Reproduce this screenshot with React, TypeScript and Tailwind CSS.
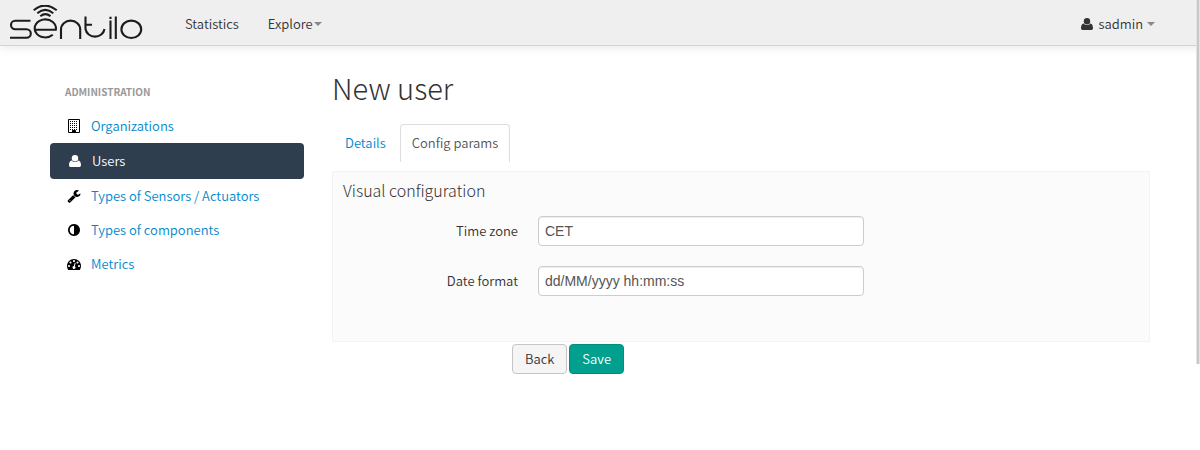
import type { ReactNode } from "react";

const ICON_PATHS = {
  wrench:
    "M448 1472q0-26-19-45t-45-19-45 19-19 45 19 45 45 19 45-19 19-45zm644-420l-682 682q-37 37-90 37-52 0-91-37l-106-108q-38-36-38-90 0-53 38-91l681-681q39 98 114.5 173.5t173.5 114.5zm634-435q0 39-23 106-47 134-164.5 217.5t-258.5 83.5q-185 0-316.5-131.5t-131.5-316.5 131.5-316.5 316.5-131.5q58 0 121.5 16.5t107.5 46.5q16 11 16 28t-16 28l-293 169v224l193 107q5-3 79-48.5t135.5-81 70.5-35.5q15 0 23.5 10t8.5 25z",
  adjust:
    "M896 1440v-1088q-148 0-273 73t-198 198-73 273 73 273 198 198 273 73zm768-544q0 209-103 385.5t-279.5 279.5-385.5 103-385.5-103-279.5-279.5-103-385.5 103-385.5 279.5-279.5 385.5-103 385.5 103 279.5 279.5 103 385.5z",
  gauge:
    "M384 1152q0-53-37.5-90.5t-90.5-37.5-90.5 37.5-37.5 90.5 37.5 90.5 90.5 37.5 90.5-37.5 37.5-90.5zm192-448q0-53-37.5-90.5t-90.5-37.5-90.5 37.5-37.5 90.5 37.5 90.5 90.5 37.5 90.5-37.5 37.5-90.5zm428 481l101-382q6-26-7.5-48.5t-38.5-29.5-48 6.5-30 39.5l-101 382q-60 5-107 43.5t-63 98.5q-20 77 20 146t117 89 146-20 89-117q16-60-6-117t-72-91zm660-33q0-53-37.5-90.5t-90.5-37.5-90.5 37.5-37.5 90.5 37.5 90.5 90.5 37.5 90.5-37.5 37.5-90.5zm-640-640q0-53-37.5-90.5t-90.5-37.5-90.5 37.5-37.5 90.5 37.5 90.5 90.5 37.5 90.5-37.5 37.5-90.5zm448 192q0-53-37.5-90.5t-90.5-37.5-90.5 37.5-37.5 90.5 37.5 90.5 90.5 37.5 90.5-37.5 37.5-90.5zm320 448q0 261-141 483-19 29-54 29h-1402q-35 0-54-29-141-221-141-483 0-182 71-348t191-286 286-191 348-71 348 71 286 191 191 286 71 348z",
};

function Icon({ name }: { name: keyof typeof ICON_PATHS }) {
  return (
    <svg className="size-3.5 shrink-0" viewBox="0 0 1792 1792" fill="currentColor" aria-hidden="true">
      <path d={ICON_PATHS[name]} />
    </svg>
  );
}

function UserIcon() {
  return (
    <svg className="size-3.5 shrink-0" viewBox="0 0 14 14" fill="currentColor" aria-hidden="true">
      <circle cx="7" cy="4.2" r="3.2" />
      <path d="M3.700 6.500C1.800 6.700 1 8.700 1 11.200c0 1.200.8 1.800 1.900 1.800h8.200c1.100 0 1.900-.6 1.900-1.800 0-2.500-.8-4.500-2.700-4.700C9.400 7.500 8.300 8 7 8s-2.400-.5-3.300-1.500z" />
    </svg>
  );
}

function BuildingIcon() {
  return (
    <svg className="size-3.5 shrink-0" viewBox="0 0 14 14" fill="none" stroke="currentColor" aria-hidden="true">
      <path d="M1.5 .5h11v13h-11z" />
      <path d="M3 2.5h8M3 4.5h8M3 6.500h8M3 8.500h8M3 10.500h8" strokeDasharray="1 1" />
      <path d="M5.500 13.500V11.500h3v2z" fill="currentColor" />
    </svg>
  );
}

function Logo() {
  return (
    <svg className="h-9 w-[134px]" viewBox="0 0 134 36" fill="none" stroke="#1c1c1c" strokeWidth="2.1" role="img" aria-label="sentilo">
      <path d="M21.500 15.800H6.200a4.200 4.200 0 0 0 0 8.400h11.300a4.300 4.300 0 0 1 0 8.600H1" />
      <path d="M25.500 24.800h21.300a10.600 9 0 1 0-3 5" />
      <path d="M52 34V24.500a9.600 8.900 0 0 1 19.200 0V34" />
      <path d="M76.500 11.500v12.500a9.600 8.900 0 0 0 19 0M76.500 19.800h6.500" />
      <path d="M101.500 15.500V34M106.800 11.500V34M101.500 11.700v2.200" />
      <ellipse cx="122.300" cy="24.300" rx="9.900" ry="8.700" />
      <path d="M24.700 5.300q11-9.500 23 0M28.300 8.200q8-6.500 16 0M31.300 11.200q5-4 10.200 0" />
    </svg>
  );
}

function Caret() {
  return (
    <svg className="h-1 w-2" viewBox="0 0 8 4" fill="#888" aria-hidden="true">
      <path d="M0 0h8L4 4z" />
    </svg>
  );
}

function SideLink({ icon, children }: { icon: ReactNode; children: ReactNode }) {
  return (
    <a href="#" className="flex h-[34px] items-center gap-2.5 pl-[17px] text-[#0088cc]">
      <span className="text-black">{icon}</span>
      {children}
    </a>
  );
}

function Field({ id, label, value }: { id: string; label: string; value: string }) {
  return (
    <div className="flex gap-5">
      <label htmlFor={id} className="w-[175px] shrink-0 text-right leading-[30px]">
        {label}
      </label>
      <input
        id={id}
        type="text"
        defaultValue={value}
        className="h-[30px] w-full max-w-[326px] min-w-0 rounded border border-[#ccc] bg-white px-1.5 font-['Liberation_Sans',Arial,sans-serif] text-sm font-normal text-[#555] shadow-[inset_0_1px_1px_rgba(0,0,0,0.075)]"
      />
    </div>
  );
}

export default function App() {
  return (
    <div className="relative font-['Noto_Sans_CJK_SC',sans-serif] text-[13px] leading-5 font-[350] text-[#333]">
      <header className="flex h-[46px] items-center justify-between border-b border-[#d4d4d4] bg-[#efefef] pr-[45px] pl-[9px] shadow-[0_1px_10px_rgba(0,0,0,0.1)]">
        <div className="flex items-center">
          <a href="#">
            <Logo />
          </a>
          <nav className="ml-[42px] flex gap-[29px] pt-0.5">
            <a href="#">Statistics</a>
            <button type="button" className="flex items-center gap-px">
              Explore
              <Caret />
            </button>
          </nav>
        </div>
        <button type="button" className="flex items-center gap-1 pt-0.5">
          <UserIcon />
          <span>sadmin</span>
          <Caret />
        </button>
      </header>

      <div className="flex gap-7 px-[50px]">
        <aside className="w-[254px] shrink-0 pt-9">
          <h2 className="pl-[15px] text-[10px] font-bold text-[#999]">ADMINISTRATION</h2>
          <nav className="mt-[7px]">
            <SideLink icon={<BuildingIcon />}>Organizations</SideLink>
            <a
              href="#"
              aria-current="page"
              className="flex h-9 items-center gap-2.5 rounded bg-[#2f3e4e] pl-[18px] text-white"
            >
              <UserIcon />
              Users
            </a>
            <SideLink icon={<Icon name="wrench" />}>Types of Sensors / Actuators</SideLink>
            <SideLink icon={<Icon name="adjust" />}>Types of components</SideLink>
            <SideLink icon={<Icon name="gauge" />}>Metrics</SideLink>
          </nav>
        </aside>

        <main className="min-w-0 flex-1 pt-[22px]">
          <h1 className="text-[29px] leading-[38px] font-light">New user</h1>
          <div role="tablist" className="mt-[18px] flex items-start">
            <button type="button" role="tab" aria-selected="false" className="mr-px h-[38px] px-[13px] text-[#0088cc]">
              Details
            </button>
            <button
              type="button"
              role="tab"
              aria-selected="true"
              className="h-[38px] rounded-t border border-b-0 border-[#ddd] px-[11px] pb-px text-[#555]"
            >
              Config params
            </button>
          </div>
          <form>
            <fieldset className="mt-[9px] border border-[#f3f3f3] bg-[#fbfbfb] px-2.5 pb-[45px]">
              <h2 className="pt-[3px] text-[16px] leading-[30px] font-light">Visual configuration</h2>
              <div className="mt-[11px] flex flex-col gap-5">
                <Field id="timezone" label="Time zone" value="CET" />
                <Field id="dateformat" label="Date format" value="dd/MM/yyyy hh:mm:ss" />
              </div>
            </fieldset>
            <div className="mt-0.5 flex gap-0.5 pl-[180px]">
              <button type="button" className="h-[30px] rounded border border-[#c5c5c5] bg-[#f5f5f5] px-3">
                Back
              </button>
              <button type="submit" className="h-[30px] rounded border border-[#008f7e] bg-[#009f8e] px-3 text-white">
                Save
              </button>
            </div>
          </form>
        </main>
      </div>

      <div className="absolute top-0 right-0 h-[364px] w-1 border-r border-l border-[#e4e4e4] bg-[#c8c8c8]" />
    </div>
  );
}
